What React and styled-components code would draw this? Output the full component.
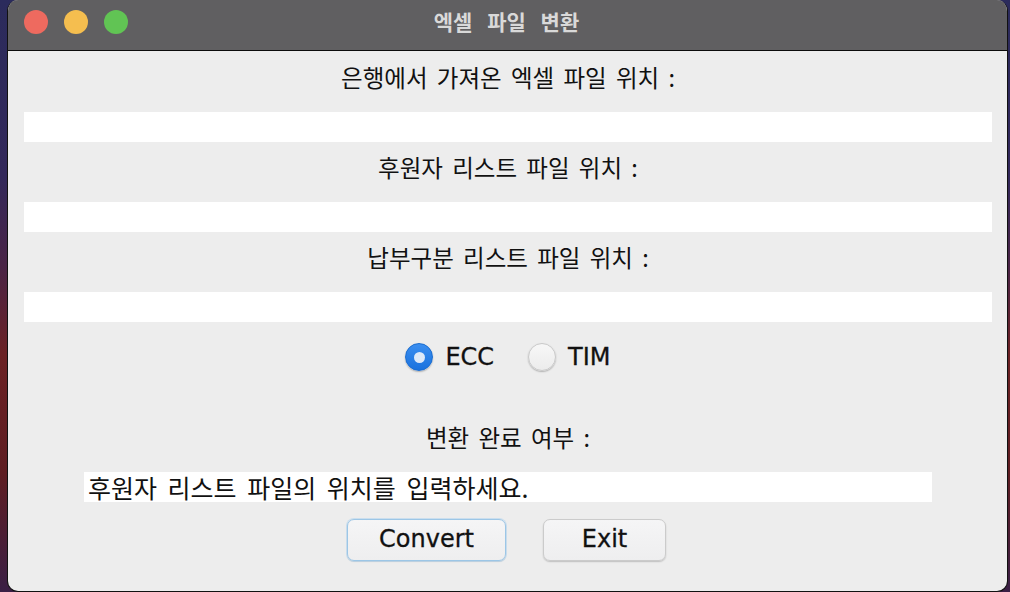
import React, { useState } from "react";
import styled, { createGlobalStyle } from "styled-components";

const Global = createGlobalStyle`
  html, body { margin: 0; padding: 0; }
  body {
    width: 1010px;
    height: 592px;
    overflow: hidden;
    background: linear-gradient(180deg, #2b2b5c 0%, #33285a 30%, #4a2446 45%, #6b2124 60%, #5e1d22 80%, #3a1f45 100%);
  }
  #root { height: 592px; }
`;

const Window = styled.div`
  box-sizing: border-box;
  margin-left: 7px;
  width: 1001px;
  height: 592px;
  background: #ededed;
  border: 1px solid #111;
  border-top: none;
  border-radius: 11px;
  overflow: hidden;
  display: flex;
  flex-direction: column;
`;

const TitleBar = styled.div`
  box-sizing: border-box;
  height: 51px;
  flex: 0 0 51px;
  background: #605f61;
  border-bottom: 1px solid #0c0c0c;
  display: grid;
  grid-template-columns: 1fr auto 1fr;
  align-items: start;
  padding-top: 10px;
`;

const Lights = styled.div`
  display: flex;
  gap: 16px;
  padding-left: 16px;
`;

const Light = styled.span`
  width: 24px;
  height: 24px;
  border-radius: 50%;
  background: ${(p) => p.$c};
  display: block;
`;

const Title = styled.div`
  font-family: "Noto Sans CJK KR", "Noto Sans", sans-serif;
  font-weight: 700;
  font-size: 21px;
  line-height: 22px;
  color: #d9d9d9;
  word-spacing: 10px;
  margin-right: 2px;
`;

const Content = styled.div`
  display: flex;
  flex-direction: column;
  padding: 0 15px 0 16px;
`;

const LabelRow = styled.div`
  height: ${(p) => p.$h}px;
  display: flex;
  align-items: center;
  justify-content: center;
  box-sizing: border-box;
  padding-top: ${(p) => p.$pt || 0}px;
  padding-bottom: ${(p) => p.$pb || 0}px;
  font-family: "Noto Sans CJK KR", sans-serif;
  font-size: 23.5px;
  word-spacing: 4px;
  color: #111;
`;

const Field = styled.div`
  height: 30px;
  background: #ffffff;
`;

const StatusField = styled.div`
  box-sizing: border-box;
  width: 848px;
  height: 30px;
  align-self: center;
  background: #ffffff;
  padding-left: 4px;
  font-family: "Noto Sans CJK KR", sans-serif;
  font-size: 25px;
  line-height: 30px;
  word-spacing: 5px;
  color: #111;
  white-space: nowrap;
`;

const RadioRow = styled.div`
  height: 70px;
  display: flex;
  align-items: center;
  justify-content: center;
  gap: 34px;
`;

const RadioOption = styled.label`
  display: flex;
  align-items: center;
  gap: 12px;
  font-family: "DejaVu Sans", sans-serif;
  font-size: 24px;
  -webkit-text-stroke: 0.3px #111;
  color: #111;
  cursor: default;
`;

const RadioCircle = styled.span`
  box-sizing: border-box;
  width: 28px;
  height: 28px;
  border-radius: 50%;
  display: flex;
  align-items: center;
  justify-content: center;
  background: ${(p) =>
    p.$on
      ? "linear-gradient(180deg, #3a8ef0 0%, #1a72de 100%)"
      : "linear-gradient(180deg, #f7f7f7 0%, #ececec 100%)"};
  border: 1px solid ${(p) => (p.$on ? "#1a6ccf" : "#c9c9c9")};
  box-shadow: 0 1px 1.5px rgba(0, 0, 0, 0.25);
`;

const Dot = styled.span`
  width: 11px;
  height: 11px;
  border-radius: 50%;
  background: #dde9f8;
`;

const ButtonRow = styled.div`
  display: flex;
  justify-content: center;
  gap: 37px;
  padding-top: 17px;
  padding-right: 3px;
`;

const Button = styled.button`
  box-sizing: border-box;
  width: ${(p) => p.$w}px;
  height: 42px;
  border-radius: 7px;
  background: linear-gradient(180deg, #f5f5f6 0%, #eeeeef 100%);
  border: 1px solid ${(p) => (p.$focus ? "#9cc6e6" : "#cbcbcb")};
  box-shadow: ${(p) =>
    p.$focus
      ? "0 0 0 1px rgba(160, 205, 240, 0.45), 0 1px 1px rgba(0,0,0,0.12)"
      : "0 1px 1.5px rgba(0, 0, 0, 0.2)"};
  font-family: "DejaVu Sans", sans-serif;
  font-size: 24px;
  -webkit-text-stroke: 0.3px #111;
  color: #111;
  padding: 0 0 2px;
`;

export default function App() {
  const [mode, setMode] = useState("ECC");
  return (
    <>
      <Global />
      <Window>
        <TitleBar>
          <Lights>
            <Light $c="#ee6a5f" />
            <Light $c="#f5be4f" />
            <Light $c="#61c454" />
          </Lights>
          <Title>엑셀 파일 변환</Title>
          <div />
        </TitleBar>
        <Content>
          <LabelRow $h={61} $pb={10}>은행에서 가져온 엑셀 파일 위치 :</LabelRow>
          <Field />
          <LabelRow $h={60} $pb={10}>후원자 리스트 파일 위치 :</LabelRow>
          <Field />
          <LabelRow $h={60} $pb={10}>납부구분 리스트 파일 위치 :</LabelRow>
          <Field />
          <RadioRow>
            <RadioOption onClick={() => setMode("ECC")}>
              <RadioCircle $on={mode === "ECC"}>{mode === "ECC" && <Dot />}</RadioCircle>
              ECC
            </RadioOption>
            <RadioOption onClick={() => setMode("TIM")}>
              <RadioCircle $on={mode === "TIM"}>{mode === "TIM" && <Dot />}</RadioCircle>
              TIM
            </RadioOption>
          </RadioRow>
          <LabelRow $h={80} $pt={10}>변환 완료 여부 :</LabelRow>
          <StatusField>후원자 리스트 파일의 위치를 입력하세요.</StatusField>
          <ButtonRow>
            <Button $w={159} $focus>Convert</Button>
            <Button $w={123}>Exit</Button>
          </ButtonRow>
        </Content>
      </Window>
    </>
  );
}
